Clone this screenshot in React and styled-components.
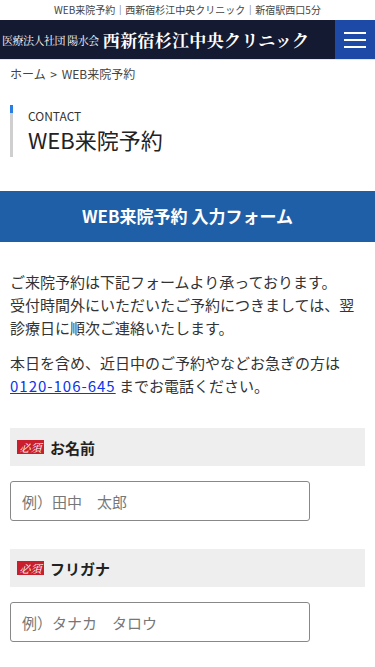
import React from 'react';
import styled, { createGlobalStyle } from 'styled-components';

const GlobalStyle = createGlobalStyle`
  body {
    margin: 0;
    background: #fff;
    color: #333;
    font-family: "Noto Sans CJK JP", "Noto Sans", sans-serif;
  }
  * {
    box-sizing: border-box;
  }
`;

const fields = [
  { label: 'お名前', placeholder: '例）田中　太郎' },
  { label: 'フリガナ', placeholder: '例）タナカ　タロウ' },
];

function App() {
  return (
    <>
      <GlobalStyle />
      <TopBar>WEB来院予約｜西新宿杉江中央クリニック｜新宿駅西口5分</TopBar>
      <Header>
        <Logo>
          <LogoSub>医療法人社団 陽水会</LogoSub>
          <LogoMain>西新宿杉江中央クリニック</LogoMain>
        </Logo>
        <MenuButton aria-label="menu">
          <span />
          <span />
          <span />
        </MenuButton>
      </Header>
      <Breadcrumb>ホーム &gt; WEB来院予約</Breadcrumb>
      <PageTitle>
        <TitleEn>CONTACT</TitleEn>
        <TitleJa>WEB来院予約</TitleJa>
      </PageTitle>
      <Banner>WEB来院予約 入力フォーム</Banner>
      <Body>
        <Text>
          ご来院予約は下記フォームより承っております。
          <br />
          受付時間外にいただいたご予約につきましては、翌診療日に順次ご連絡いたします。
        </Text>
        <Text>
          本日を含め、近日中のご予約やなどお急ぎの方は
          <br />
          <Phone href="#">0120-106-645</Phone> までお電話ください。
        </Text>
        {fields.map((f, i) => (
          <Field key={i}>
            <Label>
              <Required>必須</Required>
              {f.label}
            </Label>
            <Input placeholder={f.placeholder} />
          </Field>
        ))}
      </Body>
    </>
  );
}

export default App;

const TopBar = styled.div`
  height: 20px;
  font-size: 10px;
  line-height: 20px;
  text-align: center;
  color: #444;
  white-space: nowrap;
`;

const Header = styled.header`
  display: flex;
  align-items: stretch;
  height: 40px;
  background: #151a33;
  border-bottom: 1px solid #e6e6e6;
`;

const Logo = styled.div`
  flex: 1;
  display: flex;
  align-items: center;
  gap: 4px;
  padding-left: 2px;
  color: #fff;
  font-family: "Noto Serif CJK JP", "Liberation Serif", serif;
  white-space: nowrap;
`;

const LogoSub = styled.span`
  font-size: 11px;
  letter-spacing: -0.5px;
`;

const LogoMain = styled.span`
  font-size: 17px;
  font-weight: bold;
  letter-spacing: 0.3px;
`;

const MenuButton = styled.button`
  width: 40px;
  border: 0;
  padding: 0;
  background: #1d4aa6;
  display: flex;
  flex-direction: column;
  align-items: center;
  justify-content: center;
  gap: 5px;

  span {
    display: block;
    width: 22px;
    height: 2px;
    background: #fff;
  }
`;

const Breadcrumb = styled.div`
  padding: 5px 10px 0;
  font-size: 12px;
  line-height: 18px;
  color: #444;
  word-spacing: 2px;
`;

const PageTitle = styled.div`
  margin: 22px 0 0 10px;
  padding: 2px 0 4px 15px;
  border-left: 3px solid #ccc;
  border-image: linear-gradient(to bottom, #2a7de1 0, #2a7de1 9px, #cfcfcf 9px) 1;
`;

const TitleEn = styled.div`
  font-size: 12px;
  line-height: 18px;
  color: #333;
`;

const TitleJa = styled.h1`
  margin: 0;
  font-size: 22px;
  font-weight: normal;
  line-height: 28px;
  color: #222;
`;

const Banner = styled.div`
  margin-top: 34px;
  height: 51px;
  background: #1f5fa8;
  color: #fff;
  font-size: 17px;
  font-weight: bold;
  line-height: 50px;
  text-align: center;
`;

const Body = styled.div`
  padding: 16px 10px 0;
`;

const Text = styled.p`
  margin: 12px 0 0;
  font-size: 15px;
  line-height: 23px;
  color: #333;
`;

const Phone = styled.a`
  color: #0a37e8;
  text-decoration: underline;
  letter-spacing: 1px;
`;

const Field = styled.div`
  margin-top: 31px;

  & + & {
    margin-top: 28px;
  }
`;

const Label = styled.div`
  display: flex;
  align-items: center;
  gap: 6px;
  height: 38px;
  padding-left: 7px;
  background: #eee;
  font-size: 15px;
  font-weight: bold;
  color: #222;
`;

const Required = styled.span`
  width: 27px;
  height: 14px;
  background: #c91f2c;
  color: #fff;
  font-family: "Noto Serif CJK JP", "Liberation Serif", serif;
  font-size: 11px;
  font-style: italic;
  font-weight: normal;
  line-height: 14px;
  text-align: center;
`;

const Input = styled.input`
  display: block;
  margin-top: 15px;
  width: 300px;
  height: 40px;
  padding: 0 11px;
  border: 1px solid #888;
  border-radius: 3px;
  font-family: inherit;
  font-size: 15px;
  color: #333;

  &::placeholder {
    color: #777;
  }
`;
